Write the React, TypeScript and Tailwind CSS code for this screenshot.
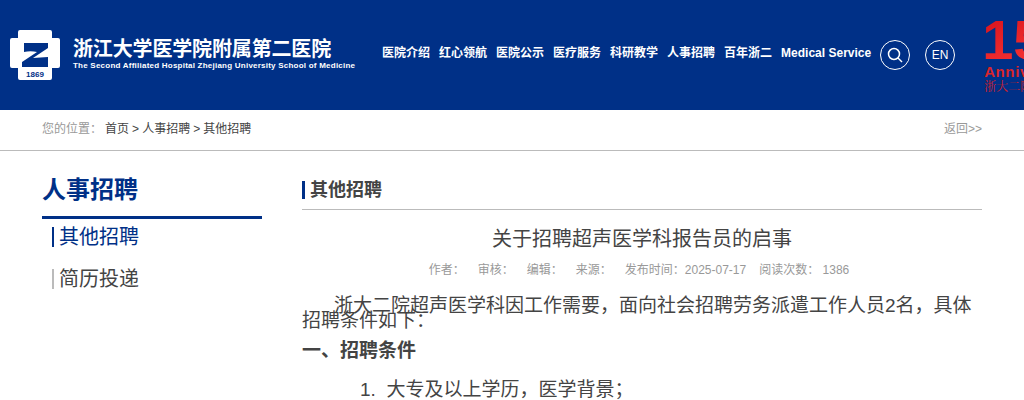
const nav = ["医院介绍", "红心领航", "医院公示", "医疗服务", "科研教学", "人事招聘", "百年浙二", "Medical Service"];

const font = "font-['Liberation_Sans','Noto_Sans_CJK_SC',sans-serif]";

function Logo() {
  return (
    <div className="flex items-center w-[374px] shrink-0">
      <svg width="50" height="50" viewBox="0 0 50 50" className="ml-[10px] shrink-0">
        <path d="M8 2a2 2 0 0 1 2-2h30a2 2 0 0 1 2 2v6h6a2 2 0 0 1 2 2v26a2 2 0 0 1-2 2h-6v10a2 2 0 0 1-2 2H10a2 2 0 0 1-2-2V38H2a2 2 0 0 1-2-2V10a2 2 0 0 1 2-2h6z" fill="#fff" />
        <path d="M14 13h24v5L23 28c5 0 10-1 15-1v10H12v-5l15-10c-4-1-9-1-13 0z" fill="#003087" />
        <text x="25" y="47" textAnchor="middle" fontSize="8" fontWeight="700" fill="#003087" fontFamily="Liberation Sans">1869</text>
      </svg>
      <div className="ml-[13px] mb-[2px] text-white">
        <div className="text-[20px] leading-[23px] font-bold -tracking-[0.15px] whitespace-nowrap">浙江大学医学院附属第二医院</div>
        <div className="text-[8px] leading-[10px] font-bold tracking-[0.23px] whitespace-nowrap">
          The Second Affiliated Hospital Zhejiang University School of Medicine
        </div>
      </div>
    </div>
  );
}

export default function App() {
  return (
    <div className={`${font} h-[400px] w-[1024px] overflow-hidden bg-white`}>
      <header className="flex h-[110px] items-center overflow-hidden bg-[#003087]">
        <Logo />
        <nav className="ml-[8px] flex gap-[9px] shrink-0 -translate-y-[2px]">
          {nav.map((item) => (
            <a key={item} className="text-xs font-bold text-white whitespace-nowrap">{item}</a>
          ))}
        </nav>
        <button className="ml-[9px] flex h-[30px] w-[30px] shrink-0 items-center justify-center rounded-full border border-white">
          <svg width="16" height="16" viewBox="0 0 16 16" fill="none" stroke="#fff" strokeWidth="1.5">
            <circle cx="7" cy="7" r="5.5" />
            <path d="M11 11L15 15" />
          </svg>
        </button>
        <button className="ml-[15px] flex h-[30px] w-[30px] shrink-0 items-center justify-center rounded-full border border-white text-xs text-white">
          EN
        </button>
        <div className="ml-[27px] shrink-0 translate-y-[1px]">
          <div className="bg-gradient-to-br from-[#d8101c] to-[#ff3b3b] bg-clip-text text-[56px] leading-[44px] font-bold text-transparent">150</div>
          <div className="mt-[2px] ml-[2px] text-[15px] leading-[16px] font-bold tracking-[0.6px] text-[#d9252b]">Anniversary</div>
          <div className="ml-[2px] text-[12px] leading-[15px] font-['Liberation_Serif','Noto_Serif_CJK_SC','Noto_Sans_CJK_SC',serif] text-[#c9202e]">浙大二院</div>
        </div>
      </header>

      <div className="flex h-[41px] items-center justify-between border-b border-[#bbbbbb] px-[42px] pb-[3px] text-xs">
        <div className="flex">
          <span className="w-[63px] text-[#999999]">您的位置：</span>
          <span className="text-[#444444] [word-spacing:-0.25px]">首页 &gt; 人事招聘 &gt; 其他招聘</span>
        </div>
        <a className="text-[#999999]">返回&gt;&gt;</a>
      </div>

      <main className="flex px-[42px]">
        <aside className="w-[220px] shrink-0 pt-[23px]">
          <h2 className="border-b-[3px] border-[#003087] pb-[10px] text-2xl leading-[32px] font-bold text-[#003087]">人事招聘</h2>
          <ul className="pl-[10px] pt-[8px] text-xl">
            <li className="flex h-[20px] items-center border-l-2 border-[#003087] pl-[5px] text-[#003087]">其他招聘</li>
            <li className="mt-[22px] flex h-[20px] items-center border-l-2 border-[#bbbbbb] pl-[5px] text-[#444444]">简历投递</li>
          </ul>
        </aside>

        <section className="ml-[40px] flex-1 pt-[30px]">
          <div className="border-b border-[#bbbbbb] pb-[10px]">
            <h3 className="border-l-[3px] border-[#003087] pl-[5px] text-lg leading-[18px] font-bold text-[#444444]">其他招聘</h3>
          </div>
          <h1 className="mt-[15px] text-center text-xl leading-[28px] text-[#444444]">关于招聘超声医学科报告员的启事</h1>
          <div className="mt-[9px] flex justify-center gap-[13px] pr-[6px] text-xs leading-[16px] text-[#999999]">
            <span>作者：</span>
            <span>审核：</span>
            <span>编辑：</span>
            <span>来源：</span>
            <span>发布时间：2025-07-17</span>
            <span>阅读次数： 1386</span>
          </div>
          <div className="mt-[20px] text-[19px] text-[#444444]">
            <p className="indent-[32px] leading-[15px]">浙大二院超声医学科因工作需要，面向社会招聘劳务派遣工作人员2名，具体招聘条件如下：</p>
            <p className="mt-[9px] leading-[28px] font-bold">一、招聘条件</p>
            <p className="mt-[11px] pl-[58px] leading-[28px]">1.&nbsp;&nbsp;大专及以上学历，医学背景；</p>
          </div>
        </section>
      </main>
    </div>
  );
}
